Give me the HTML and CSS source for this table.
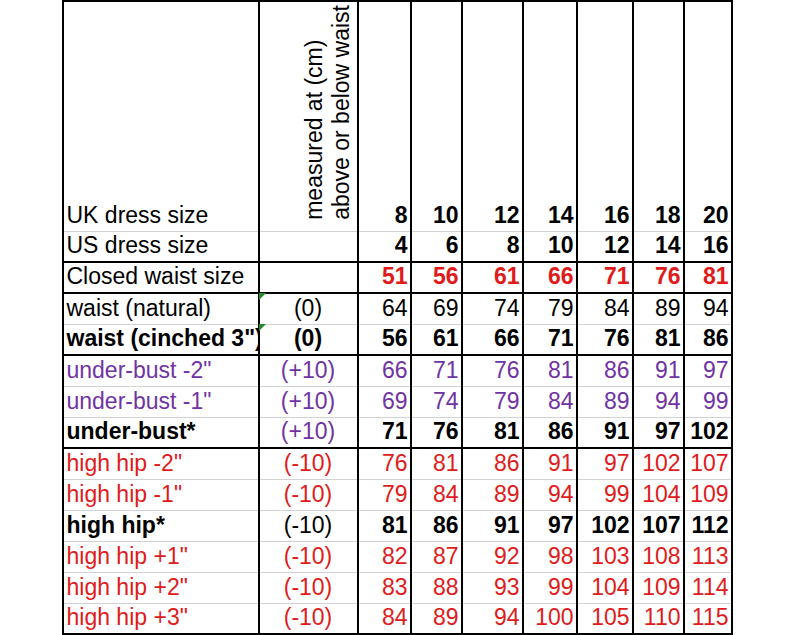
FILE: index.html
```html
<!DOCTYPE html>
<html>
<head>
<meta charset="utf-8">
<link rel="stylesheet" href="styles.css">
</head>
<body>
<table class="sizes">
  <colgroup>
    <col class="c-label"><col class="c-meas"><col class="c-a"><col class="c-b"><col class="c-c"><col class="c-d"><col class="c-e"><col class="c-f"><col class="c-g">
  </colgroup>
  <tbody>
    <tr class="head">
      <td class="lbl">UK dress size</td>
      <td class="rot"><div class="rot-text">measured at (cm)<br>above or below waist</div></td>
      <td class="b">8</td><td class="b">10</td><td class="b">12</td><td class="b">14</td><td class="b">16</td><td class="b">18</td><td class="b">20</td>
    </tr>
    <tr class="thick">
      <td class="lbl">US dress size</td><td class="meas"></td>
      <td class="b">4</td><td class="b">6</td><td class="b">8</td><td class="b">10</td><td class="b">12</td><td class="b">14</td><td class="b">16</td>
    </tr>
    <tr class="thick">
      <td class="lbl">Closed waist size</td><td class="meas"></td>
      <td class="b red">51</td><td class="b red">56</td><td class="b red">61</td><td class="b red">66</td><td class="b red">71</td><td class="b red">76</td><td class="b red">81</td>
    </tr>
    <tr>
      <td class="lbl">waist (natural)</td><td class="meas flag">(0)</td>
      <td>64</td><td>69</td><td>74</td><td>79</td><td>84</td><td>89</td><td>94</td>
    </tr>
    <tr class="thick bold-row">
      <td class="lbl">waist (cinched 3")</td><td class="meas flag">(0)</td>
      <td>56</td><td>61</td><td>66</td><td>71</td><td>76</td><td>81</td><td>86</td>
    </tr>
    <tr class="purple">
      <td class="lbl">under-bust -2"</td><td class="meas">(+10)</td>
      <td>66</td><td>71</td><td>76</td><td>81</td><td>86</td><td>91</td><td>97</td>
    </tr>
    <tr class="purple">
      <td class="lbl">under-bust -1"</td><td class="meas">(+10)</td>
      <td>69</td><td>74</td><td>79</td><td>84</td><td>89</td><td>94</td><td>99</td>
    </tr>
    <tr class="thick bold-row">
      <td class="lbl">under-bust*</td><td class="meas purple-cell">(+10)</td>
      <td>71</td><td>76</td><td>81</td><td>86</td><td>91</td><td>97</td><td>102</td>
    </tr>
    <tr class="red-row">
      <td class="lbl">high hip -2"</td><td class="meas">(-10)</td>
      <td>76</td><td>81</td><td>86</td><td>91</td><td>97</td><td>102</td><td>107</td>
    </tr>
    <tr class="red-row">
      <td class="lbl">high hip -1"</td><td class="meas">(-10)</td>
      <td>79</td><td>84</td><td>89</td><td>94</td><td>99</td><td>104</td><td>109</td>
    </tr>
    <tr class="bold-row">
      <td class="lbl">high hip*</td><td class="meas normal">(-10)</td>
      <td>81</td><td>86</td><td>91</td><td>97</td><td>102</td><td>107</td><td>112</td>
    </tr>
    <tr class="red-row">
      <td class="lbl">high hip +1"</td><td class="meas">(-10)</td>
      <td>82</td><td>87</td><td>92</td><td>98</td><td>103</td><td>108</td><td>113</td>
    </tr>
    <tr class="red-row">
      <td class="lbl">high hip +2"</td><td class="meas">(-10)</td>
      <td>83</td><td>88</td><td>93</td><td>99</td><td>104</td><td>109</td><td>114</td>
    </tr>
    <tr class="red-row thick">
      <td class="lbl">high hip +3"</td><td class="meas">(-10)</td>
      <td>84</td><td>89</td><td>94</td><td>100</td><td>105</td><td>110</td><td>115</td>
    </tr>
  </tbody>
</table>
</body>
</html>
```

FILE: styles.css
```css
html, body {
  margin: 0;
  padding: 0;
  background: #fff;
}

.sizes {
  margin: 0 auto;
  border-collapse: collapse;
  table-layout: fixed;
  width: 669px;
  font-family: "Liberation Sans", Arial, sans-serif;
  font-size: 23px;
  color: #000;
  border-top: 2px solid #000;
}

.c-label { width: 196px; }
.c-meas { width: 99px; }
.c-a { width: 53px; }
.c-b { width: 51px; }
.c-c { width: 61px; }
.c-d { width: 54px; }
.c-e { width: 56px; }
.c-f { width: 51px; }
.c-g { width: 48px; }

.sizes tr { height: 31px; }
.sizes tr.head { height: 230px; }

.sizes td {
  border-left: 2px solid #000;
  border-right: 2px solid #000;
  border-top: 1px solid #d2d2d2;
  border-bottom: 1px solid #d2d2d2;
  padding: 0 2px 2px 2px;
  text-align: right;
  vertical-align: bottom;
  white-space: nowrap;
  overflow: hidden;
  line-height: normal;
}

.sizes tr.thick td { border-bottom: 2px solid #000; }
.sizes tr.head td { border-top: 2px solid #000; }

.sizes td.lbl {
  text-align: left;
  padding-left: 3px;
  text-overflow: clip;
}

.sizes td.meas {
  text-align: center;
  position: relative;
  overflow: visible;
}

.b { font-weight: bold; }
.red, .red-row td { color: #e01b1b; }
.purple td { color: #7033a3; }
.bold-row td { font-weight: bold; }
.sizes td.purple-cell { color: #7033a3; font-weight: normal; }
.sizes td.normal { font-weight: normal; }

.sizes td.flag::before {
  content: "";
  position: absolute;
  left: -1px;
  top: -1px;
  width: 0;
  height: 0;
  border-top: 7px solid #1e8c2a;
  border-right: 7px solid transparent;
}

.sizes td.rot {
  text-align: right;
  padding: 0 2px 5px 0;
}

.rot-text {
  display: inline-block;
  writing-mode: vertical-rl;
  transform: rotate(180deg);
  text-align: left;
  line-height: normal;
}
```
